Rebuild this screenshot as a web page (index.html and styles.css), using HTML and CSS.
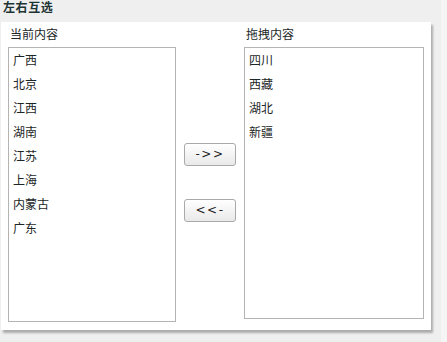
FILE: index.html
```html
<!DOCTYPE html>
<html lang="zh">
<head>
<meta charset="utf-8">
<title>左右互选</title>
<link rel="stylesheet" href="styles.css">
</head>
<body>
<div class="page">
  <div class="title">左右互选</div>
  <div class="panel">
    <div class="grid">
      <div class="label label-left">当前内容</div>
      <div class="label label-right">拖拽内容</div>
      <ul class="list list-left">
        <li>广西</li>
        <li>北京</li>
        <li>江西</li>
        <li>湖南</li>
        <li>江苏</li>
        <li>上海</li>
        <li>内蒙古</li>
        <li>广东</li>
      </ul>
      <div class="actions">
        <button class="btn" type="button">-&gt;&gt;</button>
        <button class="btn" type="button">&lt;&lt;-</button>
      </div>
      <ul class="list list-right">
        <li>四川</li>
        <li>西藏</li>
        <li>湖北</li>
        <li>新疆</li>
      </ul>
    </div>
  </div>
</div>
</body>
</html>
```
FILE: styles.css
```css
html, body {
  margin: 0;
  padding: 0;
}
body {
  background: #efefef;
  font-family: "Noto Sans CJK SC", "DejaVu Sans", sans-serif;
  font-size: 12px;
  color: #1c2626;
  width: 447px;
  height: 342px;
  overflow: hidden;
  position: relative;
}
body::after {
  content: "";
  position: absolute;
  top: 0;
  right: 0;
  width: 6px;
  height: 342px;
  background: #f5f5f5;
}
.page {
  display: flex;
  flex-direction: column;
}
.title {
  height: 22px;
  line-height: 14px;
  padding-left: 3px;
  font-weight: bold;
  font-size: 12px;
  letter-spacing: 0.6px;
  color: #1e3434;
}
.panel {
  margin-left: 1px;
  width: 430px;
  height: 308px;
  box-sizing: border-box;
  background: #fff;
  padding: 4px 0 0 7px;
  box-shadow: 2px 3px 2px rgba(0, 0, 0, 0.28);
}
.grid {
  display: grid;
  grid-template-columns: 168px 68px 180px;
  grid-template-rows: 16px auto;
  row-gap: 5px;
}
.label {
  line-height: 16px;
  color: #1c2626;
}
.label-left {
  grid-column: 1;
  grid-row: 1;
  padding-left: 2px;
}
.label-right {
  grid-column: 3;
  grid-row: 1;
  padding-left: 2px;
}
.list {
  list-style: none;
  margin: 0;
  padding: 0 0 0 4px;
  border: 1px solid #b4b4b4;
  box-sizing: border-box;
  align-self: start;
}
.list li {
  line-height: 24px;
  height: 24px;
}
.list-left {
  grid-column: 1;
  grid-row: 2;
  height: 275px;
}
.list-right {
  grid-column: 3;
  grid-row: 2;
  height: 272px;
}
.actions {
  grid-column: 2;
  grid-row: 2;
  display: flex;
  flex-direction: column;
  align-items: center;
  justify-content: center;
  gap: 33px;
  padding-bottom: 5px;
}
.btn {
  width: 52px;
  height: 23px;
  padding: 0;
  border: 1px solid #a9a9a9;
  border-radius: 3px;
  background: linear-gradient(#ffffff, #e9e9e9);
  font-family: "DejaVu Sans", sans-serif;
  font-size: 12px;
  letter-spacing: 1.5px;
  color: #222;
}
```
